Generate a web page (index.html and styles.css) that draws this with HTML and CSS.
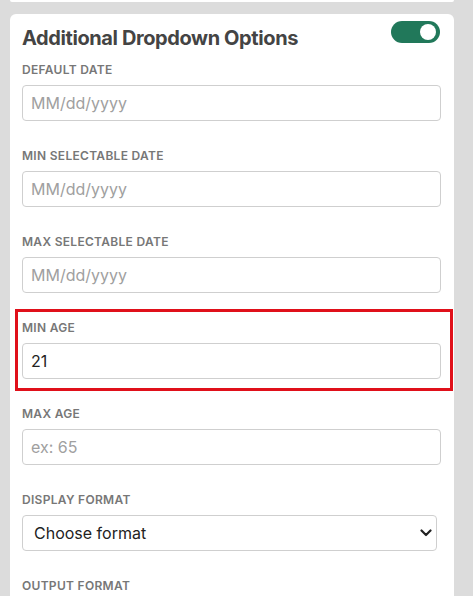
FILE: index.html
```html
<!DOCTYPE html>
<html lang="en">
<head>
    <meta charset="UTF-8">
    <meta name="viewport" content="width=device-width, initial-scale=1.0">
    <title>Additional Dropdown Options</title>
    <link rel="stylesheet" href="styles.css">
</head>
<body>
    <div class="card card-prev"></div>

    <section class="card">
        <div class="card-header">
            <h2>Additional Dropdown Options</h2>
            <label class="switch">
                <input type="checkbox" checked>
                <span class="slider"></span>
            </label>
        </div>

        <div class="field">
            <label for="default-date">Default Date</label>
            <input type="text" id="default-date" placeholder="MM/dd/yyyy">
        </div>

        <div class="field">
            <label for="min-date">Min Selectable Date</label>
            <input type="text" id="min-date" placeholder="MM/dd/yyyy">
        </div>

        <div class="field">
            <label for="max-date">Max Selectable Date</label>
            <input type="text" id="max-date" placeholder="MM/dd/yyyy">
        </div>

        <!-- highlighted field -->
        <div class="field highlight">
            <label for="min-age">Min Age</label>
            <input type="text" id="min-age" value="21">
        </div>

        <div class="field">
            <label for="max-age">Max Age</label>
            <input type="text" id="max-age" placeholder="ex: 65">
        </div>

        <div class="field">
            <label for="display-format">Display Format</label>
            <div class="select-wrap">
                <select id="display-format">
                    <option>Choose format</option>
                    <option>MM/dd/yyyy</option>
                    <option>dd/MM/yyyy</option>
                    <option>yyyy-MM-dd</option>
                </select>
                <svg class="chevron" width="12" height="8" viewBox="0 0 12 8">
                    <path d="M1.5 1.5 L6 6 L10.5 1.5" fill="none" stroke="#222" stroke-width="2.2" stroke-linecap="round" stroke-linejoin="round"/>
                </svg>
            </div>
        </div>

        <div class="field">
            <label for="output-format">Output Format</label>
            <div class="select-wrap">
                <select id="output-format">
                    <option>Choose format</option>
                </select>
            </div>
        </div>
    </section>
</body>
</html>
```

FILE: styles.css
```css
/* General Styles */
body {
    font-family: Inter, 'Noto Sans', sans-serif;
    margin: 0;
    padding: 0 19px 0 10px;
    background-color: #dcdcdc;
    color: #444;
    overflow: hidden;
}

.card {
    background: white;
    border-radius: 6px;
    padding: 7px 13px 10px 12px;
}

.card-prev {
    height: 2px;
    padding: 0;
    border-radius: 0 0 6px 6px;
    margin-bottom: 12px;
}

/* Header */
.card-header {
    display: flex;
    justify-content: space-between;
    align-items: flex-start;
    margin-bottom: 12px;
}

.card-header h2 {
    margin: 5px 0 0;
    font-size: 20px;
    line-height: 24px;
    font-weight: 700;
    letter-spacing: -0.4px;
    color: #444;
}

.switch {
    position: relative;
    display: inline-block;
    width: 49px;
    height: 22px;
    margin-right: 1px;
}

.switch input {
    opacity: 0;
    width: 0;
    height: 0;
}

.slider {
    position: absolute;
    inset: 0;
    background-color: #21785a;
    border-radius: 11px;
}

.slider::before {
    content: "";
    position: absolute;
    width: 16px;
    height: 16px;
    right: 4px;
    top: 3px;
    background: white;
    border-radius: 50%;
}

/* Fields */
.field {
    margin-bottom: 27px;
}

.field label {
    display: block;
    font-size: 12px;
    line-height: 16px;
    font-weight: 600;
    letter-spacing: 0.3px;
    text-transform: uppercase;
    color: #777;
    margin-bottom: 7px;
}

.field input,
.field select {
    display: block;
    width: 100%;
    box-sizing: border-box;
    height: 36px;
    border: 1px solid #cfcfcf;
    border-radius: 4px;
    background: white;
    font-family: inherit;
    font-size: 16px;
    color: #222;
}

.field input {
    padding: 0 8px;
}

.field input::placeholder {
    color: #a0a0a0;
}

.select-wrap {
    position: relative;
    margin-right: 4px;
}

.field select {
    appearance: none;
    padding: 0 11px;
}

.chevron {
    position: absolute;
    right: 5px;
    top: 14px;
}

.highlight {
    margin: -11px -12px 15px -7px;
    padding: 8px 9px 9px 4px;
    border: 3px solid #e0101a;
}
```
